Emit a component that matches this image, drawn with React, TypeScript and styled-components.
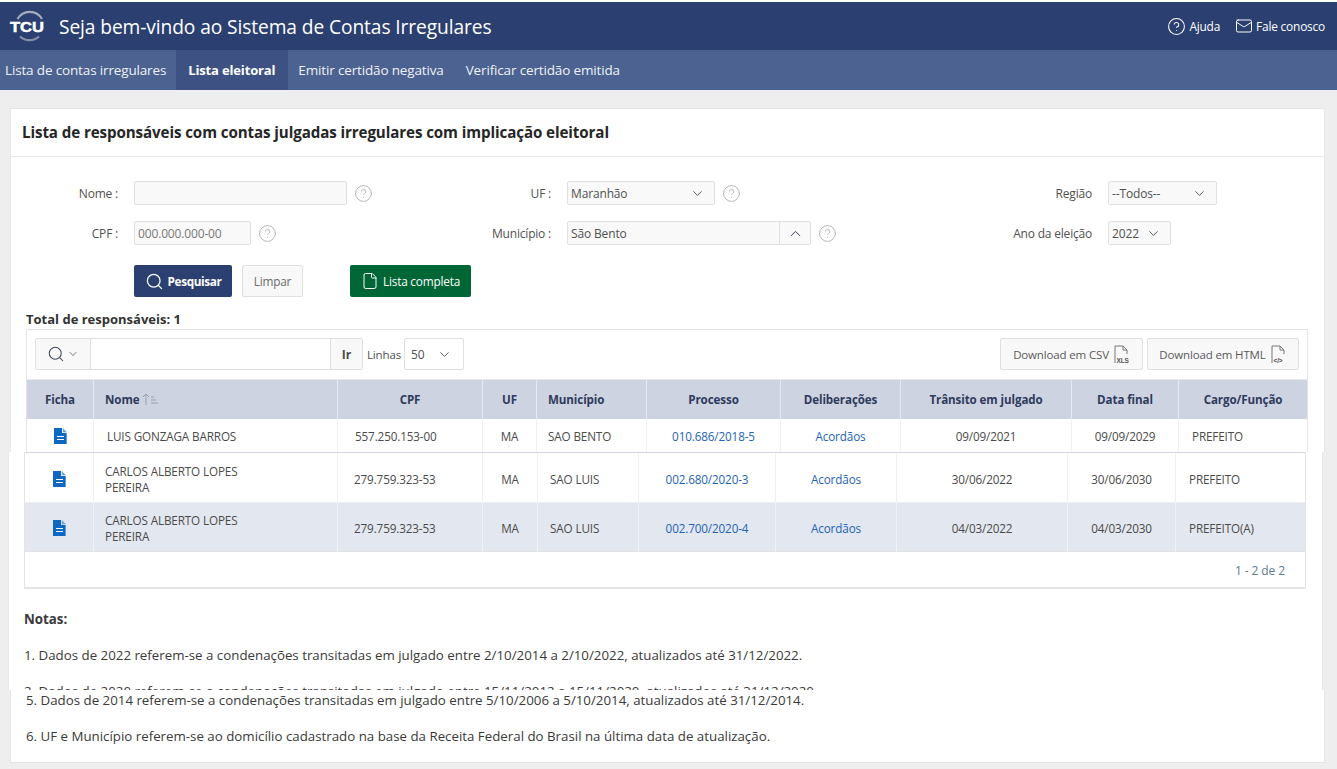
import React from 'react';
import styled, { createGlobalStyle } from 'styled-components';
import { ChevronDown, ChevronUp, CircleHelp, File, Mail, Search } from 'lucide-react';

const GlobalStyle = createGlobalStyle`
	html, body {
		margin: 0;
		padding: 0;
		height: 100%;
		overflow: hidden;
		background: #fff;
		font-family: 'Open Sans', 'Liberation Sans', sans-serif;
		font-size: 12px;
		color: #404040;
	}
	* { box-sizing: border-box; }
`;

const TopBar = styled.header`
	margin-top: 2px;
	height: 48px;
	background: #2b3f70;
	color: #fff;
	display: flex;
	align-items: center;
	padding: 0 12px 0 9px;
`;

const Brand = styled.h1`
	margin: 0 0 0 14px;
	font-size: 19.2px;
	font-weight: 400;
	letter-spacing: -0.1px;
	flex: 1;
`;

const TopLink = styled.a`
	display: flex;
	align-items: center;
	gap: 3px;
	margin-left: 15px;
	font-size: 11.9px;
	letter-spacing: -0.2px;
`;

const Menu = styled.nav`
	height: 40px;
	background: #4c6290;
	display: flex;
`;

const MenuItem = styled.a<{ $first?: boolean }>`
	display: flex;
	align-items: center;
	padding: ${({ $first }) => ($first ? '0 10px 0 5px' : '0 11px')};
	color: #eef1f7;
	font-size: 13.5px;
	letter-spacing: -0.15px;
`;

const ActiveMenuItem = styled.a`
	display: flex;
	align-items: center;
	padding: 0 13px 0 12px;
	margin-right: -1px;
	background: #3d5283;
	color: #fff;
	font-size: 13px;
	font-weight: 700;
	letter-spacing: -0.15px;
`;

const Main = styled.main`
	height: 679px;
	background: #eeeeee;
	padding-top: 18px;
	overflow: hidden;
`;

const Slice = styled.section<{ $left: number; $height: number; $last?: boolean }>`
	width: 1315px;
	margin-left: ${({ $left }) => $left}px;
	height: ${({ $height }) => $height}px;
	background: #fff;
	overflow: hidden;
	border-left: 1px solid #e8e8e8;
	border-right: 1px solid #e8e8e8;
	${({ $last }) => $last && 'border-bottom: 1px solid #e2e2e2;'}
`;

const FirstSlice = styled(Slice)`
	border-top: 1px solid #e4e4e4;
`;

const CardTitle = styled.h2`
	margin: 0;
	height: 48px;
	padding: 0 0 2px 11px;
	display: flex;
	align-items: center;
	border-bottom: 1px solid #e8e8e8;
	font-size: 15.15px;
	font-weight: 700;
	letter-spacing: -0.1px;
	color: #262626;
`;

const FilterGrid = styled.div`
	display: grid;
	grid-template-columns: 107px 300px 101px 429px 80px auto;
	grid-auto-rows: 24px;
	column-gap: 16px;
	row-gap: 16px;
	padding-top: 24px;
`;

const FieldLabel = styled.label`
	display: flex;
	align-items: center;
	justify-content: flex-end;
	font-size: 12px;
	letter-spacing: -0.2px;
	color: #505050;
`;

const Field = styled.div`
	display: flex;
	align-items: center;
	gap: 7px;
`;

const TextInput = styled.input<{ $width: number }>`
	width: ${({ $width }) => $width}px;
	height: 24px;
	padding: 0 3px;
	background: #f9f9f9;
	border: 1px solid #dfdfdf;
	border-radius: 2px;
	font: inherit;
	font-size: 12px;
	letter-spacing: -0.15px;
	color: #505050;
	&::placeholder { color: #777; opacity: 1; }
`;

const SelectBox = styled.div<{ $width: number }>`
	width: ${({ $width }) => $width}px;
	height: 24px;
	padding: 0 9px 0 3px;
	display: flex;
	align-items: center;
	justify-content: space-between;
	background: #f9f9f9;
	border: 1px solid #dfdfdf;
	border-radius: 2px;
	font-size: 12px;
	letter-spacing: -0.15px;
	color: #505050;
`;

const ComboBox = styled.div`
	width: 244px;
	height: 24px;
	display: flex;
	background: #f9f9f9;
	border: 1px solid #dfdfdf;
	border-radius: 2px;
	font-size: 12px;
	letter-spacing: -0.15px;
	color: #505050;
`;

const ComboText = styled.span`
	flex: 1;
	display: flex;
	align-items: center;
	padding-left: 3px;
`;

const ComboButton = styled.span`
	width: 31px;
	display: flex;
	align-items: center;
	justify-content: center;
	border-left: 1px solid #dfdfdf;
	color: #3f3f55;
`;

const HelpIcon = styled(CircleHelp)`
	color: #ababab;
`;

const ButtonRow = styled.div`
	display: flex;
	margin-top: 20px;
	padding-left: 123px;
`;

const ActionButton = styled.button<{ $kind: 'primary' | 'plain' | 'success'; $width: number; $gapLeft: number }>`
	width: ${({ $width }) => $width}px;
	height: 32px;
	margin-left: ${({ $gapLeft }) => $gapLeft}px;
	display: flex;
	align-items: center;
	justify-content: center;
	gap: 4px;
	padding: 0;
	border-radius: 2px;
	border: 1px solid ${({ $kind }) => ($kind === 'plain' ? '#dfdfdf' : 'transparent')};
	background: ${({ $kind }) =>
		$kind === 'primary' ? '#2b3f70' : $kind === 'success' ? '#006636' : '#f8f8f8'};
	color: ${({ $kind }) => ($kind === 'plain' ? '#6a6a6a' : '#fff')};
	font-family: inherit;
	font-size: 11.8px;
	letter-spacing: ${({ $kind }) => ($kind === 'primary' ? '-0.4px' : '-0.2px')};
	font-weight: ${({ $kind }) => ($kind === 'primary' ? 700 : 400)};
`;

const TotalLine = styled.div`
	margin: 13px 0 0 15px;
	height: 19px;
	line-height: 18px;
	font-size: 13px;
	font-weight: 700;
	color: #333;
`;

const ReportBox = styled.div<{ $open?: boolean }>`
	width: 1282px;
	margin-left: 15px;
	border: 1px solid #e4e4e4;
	${({ $open }) => ($open ? 'border-bottom: 0;' : 'border-top: 0;')}
`;

const Toolbar = styled.div`
	height: 49px;
	padding: 8px 8px 9px 8px;
	display: flex;
	align-items: center;
`;

const SearchGroup = styled.div`
	width: 328px;
	height: 32px;
	display: flex;
	border: 1px solid #dfdfdf;
	border-radius: 2px;
`;

const SearchMenu = styled.span`
	width: 55px;
	display: flex;
	align-items: center;
	justify-content: center;
	gap: 2px;
	background: #f8f8f8;
	border-right: 1px solid #dfdfdf;
	color: #3f4a5c;
`;

const SearchField = styled.span`
	flex: 1;
`;

const GoButton = styled.span`
	width: 32px;
	display: flex;
	align-items: center;
	justify-content: center;
	background: #f8f8f8;
	border-left: 1px solid #dfdfdf;
	font-weight: 700;
	font-size: 12px;
	color: #4a4a4a;
`;

const RowsLabel = styled.span`
	margin-left: 4px;
	font-size: 11.5px;
	letter-spacing: -0.15px;
	color: #505050;
`;

const RowsSelect = styled.div`
	width: 60px;
	height: 32px;
	margin-left: 3px;
	padding: 0 11px 0 6px;
	display: flex;
	align-items: center;
	justify-content: space-between;
	border: 1px solid #dfdfdf;
	border-radius: 2px;
	color: #505050;
`;

const ToolbarSpacer = styled.span`
	flex: 1;
`;

const DownloadButton = styled.button<{ $width: number }>`
	width: ${({ $width }) => $width}px;
	height: 32px;
	margin-left: 4px;
	display: flex;
	align-items: center;
	justify-content: center;
	gap: 5px;
	padding: 0;
	background: #f8f8f8;
	border: 1px solid #dfdfdf;
	border-radius: 2px;
	font-family: inherit;
	font-size: 11.5px;
	letter-spacing: -0.15px;
	color: #5a5a5a;
`;

const Grid = styled.table`
	width: 1280px;
	table-layout: fixed;
	border-collapse: separate;
	border-spacing: 0;
`;

const HeadCell = styled.th<{ $left?: boolean }>`
	height: 40px;
	padding: 0 0 0 ${({ $left }) => ($left ? '11px' : '0')};
	background: #cdd3e0;
	border-right: 1px solid #e6e9ef;
	border-top: 1px solid #e6e9ef;
	text-align: ${({ $left }) => ($left ? 'left' : 'center')};
	font-size: 11.6px;
	font-weight: 700;
	letter-spacing: -0.1px;
	color: #2f3a5c;
	&:last-child { border-right: 0; }
`;

const Cell = styled.td<{ $pad?: number; $height?: number; $alt?: boolean; $center?: boolean }>`
	height: ${({ $height }) => $height ?? 33}px;
	padding: ${({ $height }) => ($height ? 2 : 1)}px 0 0 ${({ $pad }) => $pad ?? 0}px;
	background: ${({ $alt }) => ($alt ? '#e3e7ef' : '#fff')};
	border-right: 1px solid ${({ $alt }) => ($alt ? '#f2f3f6' : '#eff0f3')};
	${({ $height, $alt }) => $height && `border-bottom: 1px solid ${$alt ? '#e3e3e6' : '#eceef2'};`}
	text-align: ${({ $center }) => ($center ? 'center' : 'left')};
	font-size: 11.7px;
	line-height: 16px;
	letter-spacing: -0.13px;
	color: #4a4a4a;
	&:last-child { border-right: 0; }
`;

const LinkText = styled.a`
	color: #1f63b5;
`;

const GridDivider = styled.div`
	height: 1px;
	background: #d2d7e1;
`;

const Pagination = styled.div`
	height: 36px;
	padding: 2px 20px 0 0;
	display: flex;
	align-items: center;
	justify-content: flex-end;
	border-bottom: 1px solid #e4e4e4;
	font-size: 12px;
	letter-spacing: -0.1px;
	color: #5d7a98;
`;

const Notes = styled.div<{ $top: number }>`
	display: flex;
	flex-direction: column;
	gap: 18px;
	padding: ${({ $top }) => $top}px 0 0 15px;
	font-size: 13.3px;
	line-height: 18px;
	color: #3a3a3a;
`;

const NotesTitle = styled.strong`
	font-weight: 700;
`;

function TcuLogo(): React.ReactElement {
	return (
		<svg width="36" height="32" viewBox="0 0 36 32">
			<path d="M8.5 9 A 14 14 0 0 1 33 9" fill="none" stroke="#a4acbf" strokeWidth="2.2" />
			<path d="M11 26.5 A 14 14 0 0 0 30 26.5" fill="none" stroke="#8590a8" strokeWidth="2.2" />
			<text
				x="1"
				y="22"
				fontFamily="'Liberation Sans', sans-serif"
				fontWeight="700"
				fontSize="15.5"
				textLength="34"
				lengthAdjust="spacingAndGlyphs"
				stroke="#fff"
				strokeWidth="0.5"
				fill="#fff"
			>
				TCU
			</text>
		</svg>
	);
}

function DocIcon(): React.ReactElement {
	return (
		<svg width="13" height="16" viewBox="0 0 13 16" style={{ display: 'block', margin: '0 auto' }}>
			<path d="M0 0H8V5H13V16H0Z" fill="#0f67c4" />
			<path d="M8.8 0L13 4.2H8.8Z" fill="#6aa5e3" />
			<path d="M12 5H13V16H12Z" fill="#5d9be0" />
			<path d="M3 8.5H10M3 11.5H10" stroke="#fff" strokeWidth="1" />
		</svg>
	);
}

function FileBadgeIcon({ label }: { label: string }): React.ReactElement {
	return (
		<svg width="16" height="19" viewBox="0 0 16 19">
			<path d="M1 12V1H9L13 5V9M9 1V5H13" fill="none" stroke="#777" strokeWidth="1" />
			<path d="M1 12V18" stroke="#777" strokeWidth="1" />
			<text x="2.5" y="17.5" fontFamily="'Liberation Sans', sans-serif" fontWeight="700" fontSize="6.5" fill="#555">
				{label}
			</text>
		</svg>
	);
}

function SortIcon(): React.ReactElement {
	return (
		<svg width="17" height="12" viewBox="0 0 17 12" style={{ verticalAlign: '-1px', marginLeft: 3 }}>
			<path d="M4 12V1M1 4L4 1L7 4" fill="none" stroke="#9aa0ab" strokeWidth="1" />
			<path d="M9 4H12M9 7H14M9 10H16" stroke="#9aa0ab" strokeWidth="1" />
		</svg>
	);
}

const upperCols = [67, 244, 145, 54, 110, 134, 120, 171, 107, 128];
const lowerCols = [69, 244, 145, 55, 101, 137, 121, 171, 108, 129];

const lowerRows = [
	{ height: 50, proc: '002.680/2020-3', transito: '30/06/2022', final: '30/06/2030', cargo: 'PREFEITO' },
	{ height: 49, proc: '002.700/2020-4', transito: '04/03/2022', final: '04/03/2030', cargo: 'PREFEITO(A)' },
];

export default function App(): React.ReactElement {
	return (
		<>
			<GlobalStyle />
			<TopBar>
				<TcuLogo />
				<Brand>Seja bem-vindo ao Sistema de Contas Irregulares</Brand>
				<TopLink>
					<CircleHelp size={19} strokeWidth={1.3} /> Ajuda
				</TopLink>
				<TopLink>
					<Mail size={18} strokeWidth={1.3} /> Fale conosco
				</TopLink>
			</TopBar>
			<Menu>
				<MenuItem $first>Lista de contas irregulares</MenuItem>
				<ActiveMenuItem>Lista eleitoral</ActiveMenuItem>
				<MenuItem>Emitir certidão negativa</MenuItem>
				<MenuItem>Verificar certidão emitida</MenuItem>
			</Menu>
			<Main>
				<FirstSlice $left={10} $height={344}>
					<CardTitle>Lista de responsáveis com contas julgadas irregulares com implicação eleitoral</CardTitle>
					<FilterGrid>
						<FieldLabel>Nome :</FieldLabel>
						<Field>
							<TextInput $width={213} readOnly />
							<HelpIcon size={19} strokeWidth={1.1} />
						</Field>
						<FieldLabel>UF :</FieldLabel>
						<Field>
							<SelectBox $width={148}>
								Maranhão <ChevronDown size={15} strokeWidth={1.5} />
							</SelectBox>
							<HelpIcon size={19} strokeWidth={1.1} />
						</Field>
						<FieldLabel>Região</FieldLabel>
						<Field>
							<SelectBox $width={109}>
								--Todos-- <ChevronDown size={15} strokeWidth={1.5} />
							</SelectBox>
						</Field>
						<FieldLabel>CPF :</FieldLabel>
						<Field>
							<TextInput $width={117} readOnly placeholder="000.000.000-00" />
							<HelpIcon size={19} strokeWidth={1.1} />
						</Field>
						<FieldLabel>Município :</FieldLabel>
						<Field>
							<ComboBox>
								<ComboText>São Bento</ComboText>
								<ComboButton>
									<ChevronUp size={17} strokeWidth={1.4} />
								</ComboButton>
							</ComboBox>
							<HelpIcon size={19} strokeWidth={1.1} />
						</Field>
						<FieldLabel>Ano da eleição</FieldLabel>
						<Field>
							<SelectBox $width={63}>
								2022 <ChevronDown size={15} strokeWidth={1.5} />
							</SelectBox>
						</Field>
					</FilterGrid>
					<ButtonRow>
						<ActionButton $kind="primary" $width={98} $gapLeft={0}>
							<Search size={19} strokeWidth={1.6} /> Pesquisar
						</ActionButton>
						<ActionButton $kind="plain" $width={61} $gapLeft={10}>
							Limpar
						</ActionButton>
						<ActionButton $kind="success" $width={121} $gapLeft={47}>
							<File size={18} strokeWidth={1.3} /> Lista completa
						</ActionButton>
					</ButtonRow>
					<TotalLine>Total de responsáveis: 1</TotalLine>
					<ReportBox $open>
						<Toolbar>
							<SearchGroup>
								<SearchMenu>
									<Search size={18} strokeWidth={1.4} />
									<ChevronDown size={12} strokeWidth={1.5} />
								</SearchMenu>
								<SearchField />
								<GoButton>Ir</GoButton>
							</SearchGroup>
							<RowsLabel>Linhas</RowsLabel>
							<RowsSelect>
								50 <ChevronDown size={15} strokeWidth={1.5} />
							</RowsSelect>
							<ToolbarSpacer />
							<DownloadButton $width={143}>
								Download em CSV <FileBadgeIcon label="XLS" />
							</DownloadButton>
							<DownloadButton $width={152}>
								Download em HTML <FileBadgeIcon label="</>" />
							</DownloadButton>
						</Toolbar>
						<Grid>
							<colgroup>
								{upperCols.map((w, i) => (
									<col key={i} width={w} />
								))}
							</colgroup>
							<thead>
								<tr>
									<HeadCell>Ficha</HeadCell>
									<HeadCell $left>
										Nome
										<SortIcon />
									</HeadCell>
									<HeadCell>CPF</HeadCell>
									<HeadCell>UF</HeadCell>
									<HeadCell $left>Município</HeadCell>
									<HeadCell>Processo</HeadCell>
									<HeadCell>Deliberações</HeadCell>
									<HeadCell>Trânsito em julgado</HeadCell>
									<HeadCell>Data final</HeadCell>
									<HeadCell>Cargo/Função</HeadCell>
								</tr>
							</thead>
							<tbody>
								<tr>
									<Cell>
										<DocIcon />
									</Cell>
									<Cell $pad={13}>LUIS GONZAGA BARROS</Cell>
									<Cell $pad={17}>557.250.153-00</Cell>
									<Cell $center>MA</Cell>
									<Cell $pad={11}>SAO BENTO</Cell>
									<Cell $center>
										<LinkText>010.686/2018-5</LinkText>
									</Cell>
									<Cell $center>
										<LinkText>Acordãos</LinkText>
									</Cell>
									<Cell $center>09/09/2021</Cell>
									<Cell $center>09/09/2029</Cell>
									<Cell $pad={13}>PREFEITO</Cell>
								</tr>
							</tbody>
						</Grid>
					</ReportBox>
				</FirstSlice>
				<Slice $left={8} $height={238}>
					<ReportBox>
						<GridDivider />
						<Grid>
							<colgroup>
								{lowerCols.map((w, i) => (
									<col key={i} width={w} />
								))}
							</colgroup>
							<tbody>
								{lowerRows.map((row, i) => (
									<tr key={row.proc}>
										<Cell $height={row.height} $alt={i === 1}>
											<DocIcon />
										</Cell>
										<Cell $height={row.height} $alt={i === 1} $pad={11}>
											CARLOS ALBERTO LOPES
											<br />
											PEREIRA
										</Cell>
										<Cell $height={row.height} $alt={i === 1} $pad={16}>
											279.759.323-53
										</Cell>
										<Cell $height={row.height} $alt={i === 1} $center>
											MA
										</Cell>
										<Cell $height={row.height} $alt={i === 1} $pad={12}>
											SAO LUIS
										</Cell>
										<Cell $height={row.height} $alt={i === 1} $center>
											<LinkText>{row.proc}</LinkText>
										</Cell>
										<Cell $height={row.height} $alt={i === 1} $center>
											<LinkText>Acordãos</LinkText>
										</Cell>
										<Cell $height={row.height} $alt={i === 1} $center>
											{row.transito}
										</Cell>
										<Cell $height={row.height} $alt={i === 1} $center>
											{row.final}
										</Cell>
										<Cell $height={row.height} $alt={i === 1} $pad={13}>
											{row.cargo}
										</Cell>
									</tr>
								))}
							</tbody>
						</Grid>
						<Pagination>1 - 2 de 2</Pagination>
					</ReportBox>
					<Notes $top={21}>
						<NotesTitle>Notas:</NotesTitle>
						<span>1. Dados de 2022 referem-se a condenações transitadas em julgado entre 2/10/2014 a 2/10/2022, atualizados até 31/12/2022.</span>
						<span>2. Dados de 2020 referem-se a condenações transitadas em julgado entre 15/11/2012 a 15/11/2020, atualizados até 31/12/2020.</span>
					</Notes>
				</Slice>
				<Slice $left={10} $height={73} $last>
					<Notes $top={1}>
						<span>5. Dados de 2014 referem-se a condenações transitadas em julgado entre 5/10/2006 a 5/10/2014, atualizados até 31/12/2014.</span>
						<span>6. UF e Município referem-se ao domicílio cadastrado na base da Receita Federal do Brasil na última data de atualização.</span>
					</Notes>
				</Slice>
			</Main>
		</>
	);
}
